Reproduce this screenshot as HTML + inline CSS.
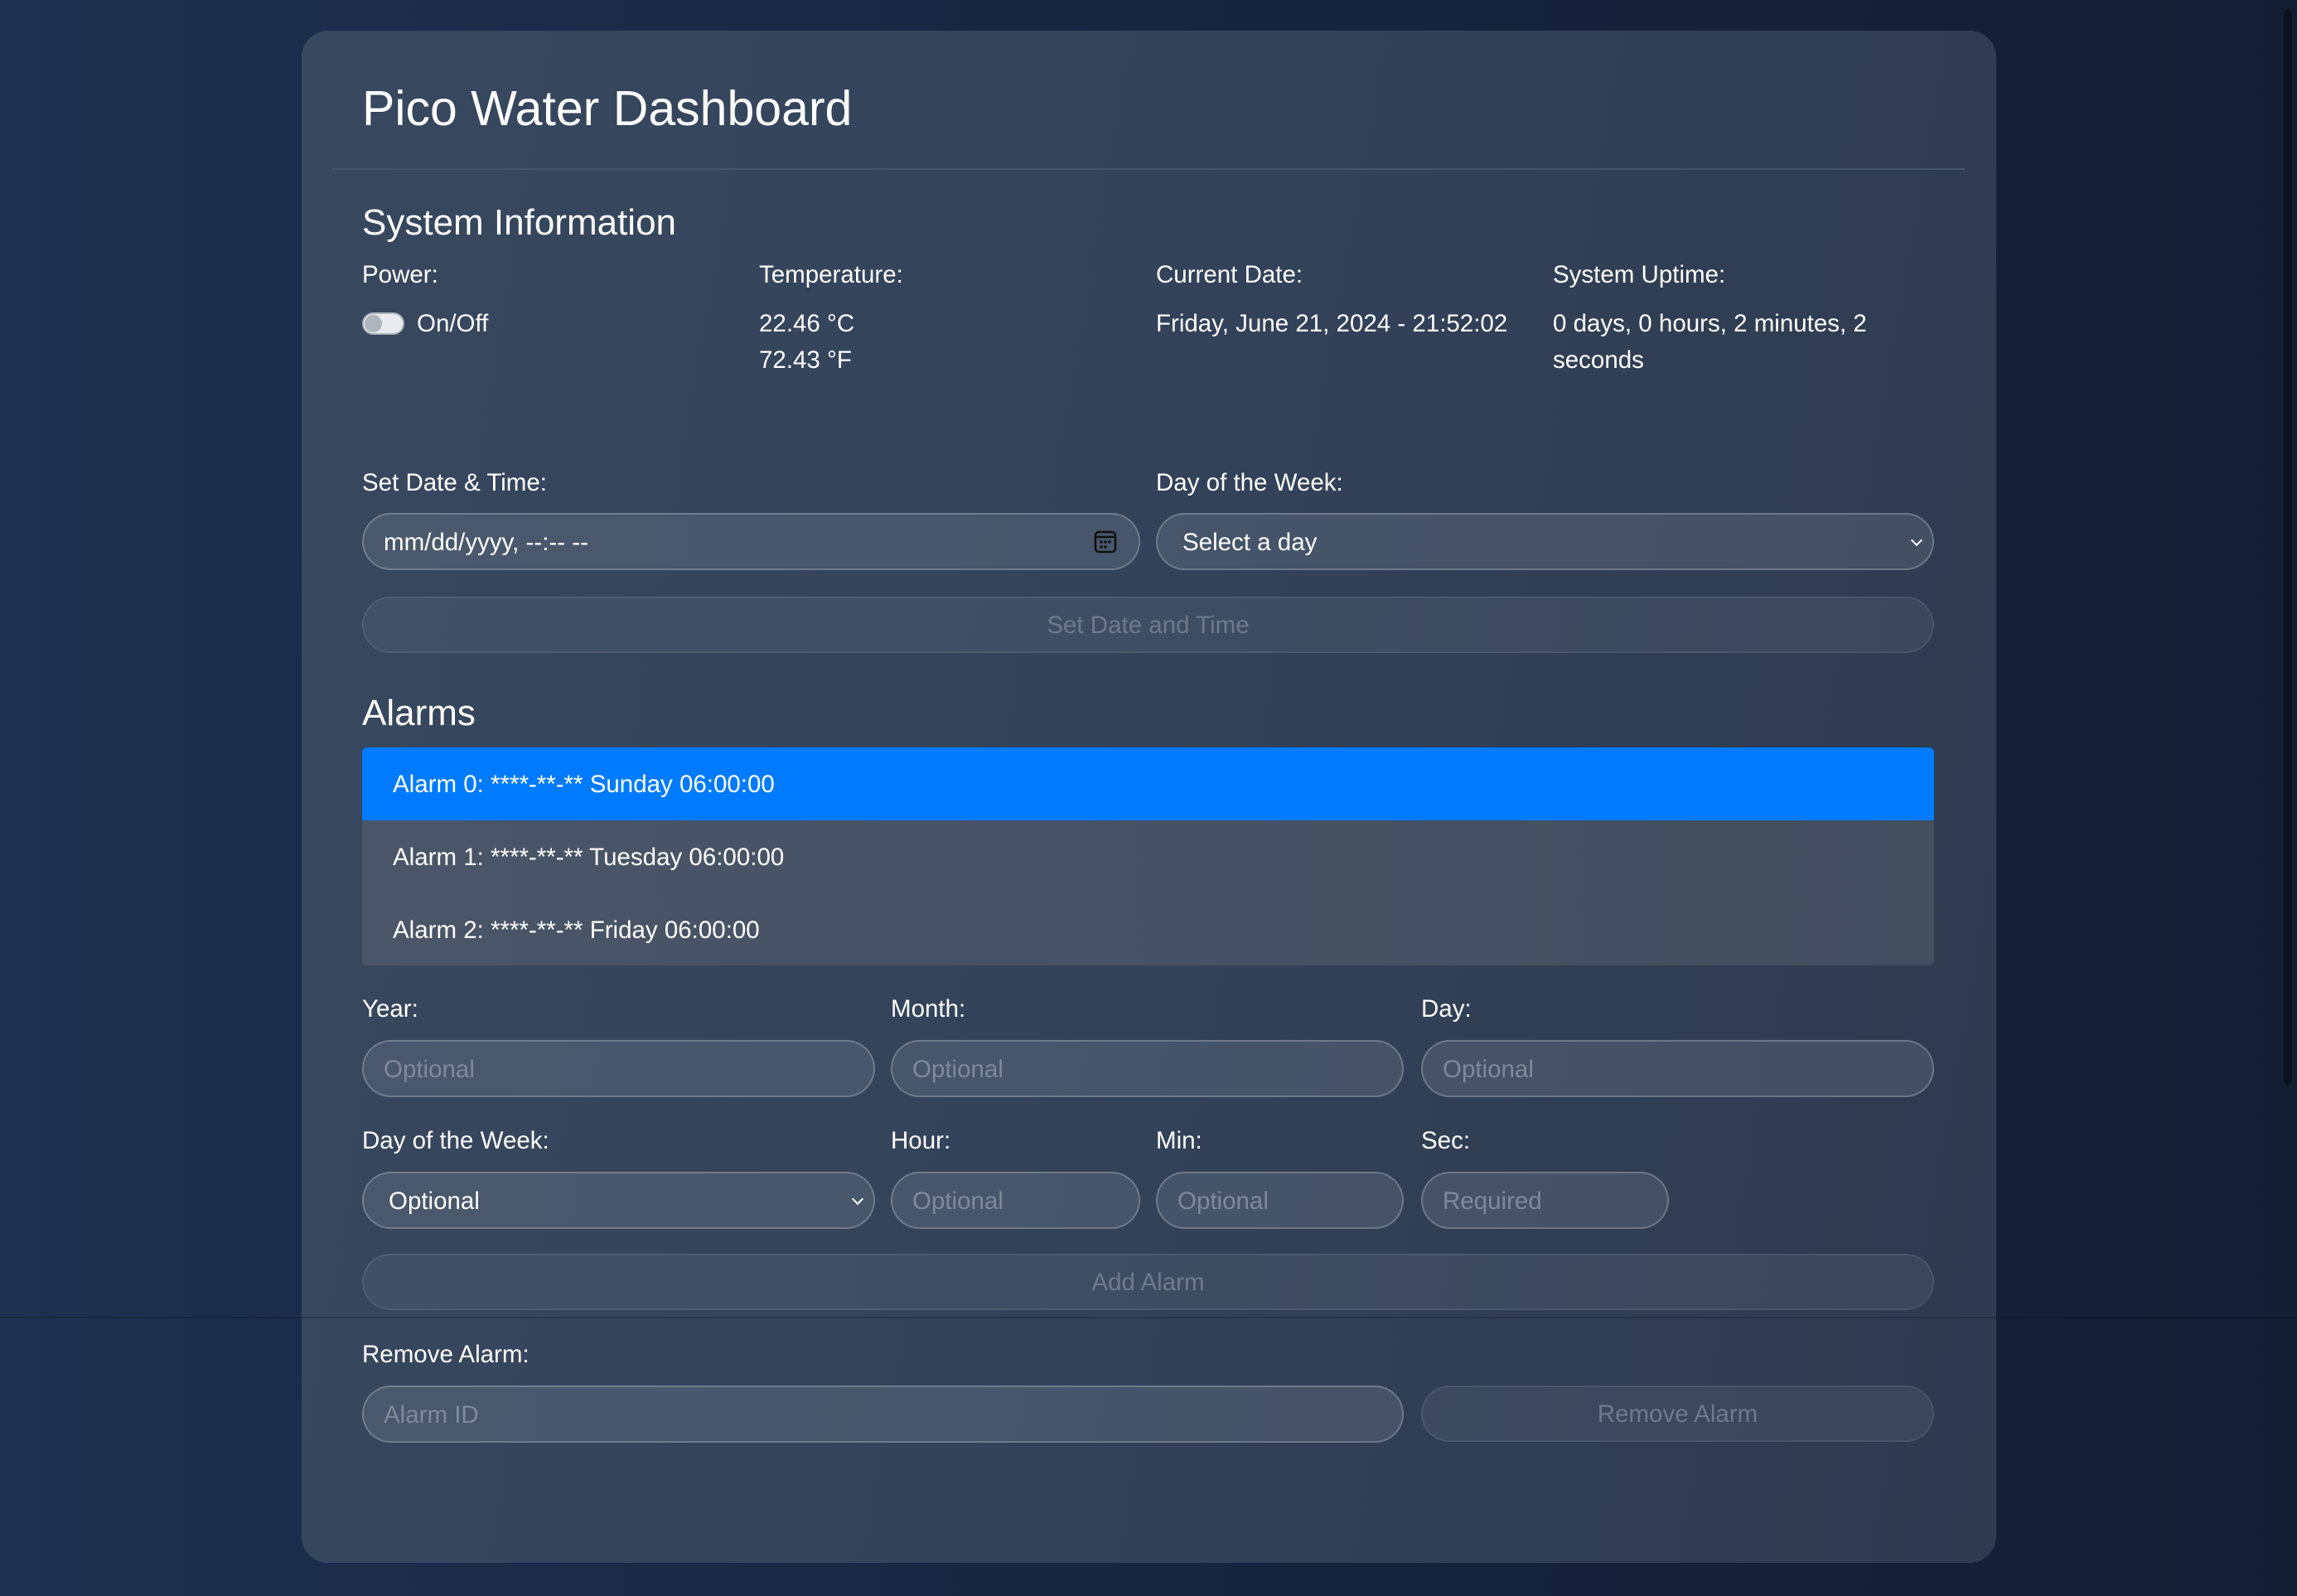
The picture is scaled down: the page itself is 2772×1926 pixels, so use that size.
<!DOCTYPE html>
<html><head><meta charset="utf-8">
<style>
*{box-sizing:border-box;margin:0;padding:0}
html,body{width:2772px;height:1926px;overflow:hidden}
body{background:linear-gradient(90deg,#1f3150 0%,#1c2c4a 15%,#172540 50%,#141e33 100%);font-family:"Liberation Sans",Arial,sans-serif;color:#fff;position:relative}
.card{position:absolute;left:364px;top:37px;width:2045px;height:1849px;border-radius:32px;background:linear-gradient(100deg,#38485e 0%,#33435a 45%,#2e3a4e 100%)}
.a{position:absolute;white-space:nowrap}
.lbl{font-size:29.5px;line-height:32px}
.h1{font-size:59px}
.h2{font-size:44px}
.inp{position:absolute;height:69px;border-radius:35px;background:rgba(255,255,255,0.1);border:2px solid rgba(255,255,255,0.22);font-size:29.5px;line-height:67px;padding-left:24px;color:#7f8998}
.btn{position:absolute;height:68px;border-radius:34px;background:rgba(255,255,255,0.06);border:2px solid rgba(255,255,255,0.08);font-size:29.5px;line-height:66px;text-align:center;color:#6f7a8a}
.sel{color:#fff;padding-left:30px}
.chev{position:absolute;right:14px;top:26px;width:10px;height:10px;border-right:2px solid #fff;border-bottom:2px solid #fff;transform:rotate(45deg)}
.row{position:absolute;left:437px;width:1897px;height:88px;font-size:29.5px;line-height:90px;padding-left:37px}
</style></head><body>
<div class="card"></div>
<div style="position:absolute;right:6px;top:10px;width:10px;height:1300px;border-radius:5px;background:#0c1220"></div>
<div class="a h1" style="left:437px;top:97px">Pico Water Dashboard</div>
<div style="position:absolute;left:401px;top:203px;width:1970px;height:2px;background:#44556b"></div>
<div class="a h2" style="left:437px;top:244px">System Information</div>
<div class="a lbl" style="left:437px;top:316px">Power:</div>
<div class="a lbl" style="left:916px;top:316px">Temperature:</div>
<div class="a lbl" style="left:1395px;top:316px">Current Date:</div>
<div class="a lbl" style="left:1874px;top:316px">System Uptime:</div>
<div style="position:absolute;left:437px;top:377px;width:51px;height:27px;border-radius:14px;background:#e9ecef;border:2px solid #adb5bd"></div>
<div style="position:absolute;left:440px;top:380px;width:21px;height:21px;border-radius:50%;background:#adb5bd"></div>
<div class="a lbl" style="left:503px;top:375px">On/Off</div>
<div class="a lbl" style="left:916px;top:375px">22.46 °C</div>
<div class="a lbl" style="left:916px;top:419px">72.43 °F</div>
<div class="a lbl" style="left:1395px;top:375px">Friday, June 21, 2024 - 21:52:02</div>
<div class="a lbl" style="left:1874px;top:375px">0 days, 0 hours, 2 minutes, 2</div>
<div class="a lbl" style="left:1874px;top:419px">seconds</div>

<div class="a lbl" style="left:437px;top:567px">Set Date &amp; Time:</div>
<div class="a lbl" style="left:1395px;top:567px">Day of the Week:</div>
<div class="inp" style="left:437px;top:619px;width:939px;color:#fff">mm/dd/yyyy, --:-- --
<svg style="position:absolute;right:26px;top:19px" width="28" height="28" viewBox="0 0 28 28"><rect x="2" y="2" width="24" height="24" rx="4" fill="none" stroke="#111" stroke-width="2.5"/><line x1="2" y1="8" x2="26" y2="8" stroke="#111" stroke-width="2.5"/><circle cx="9" cy="14" r="1.8" fill="#111"/><circle cx="14" cy="14" r="1.8" fill="#111"/><circle cx="19" cy="14" r="1.8" fill="#111"/><circle cx="9" cy="20" r="1.8" fill="#111"/><circle cx="14" cy="20" r="1.8" fill="#111"/></svg></div>
<div class="inp sel" style="left:1395px;top:619px;width:939px">Select a day<div class="chev"></div></div>
<div class="btn" style="left:437px;top:720px;width:1897px">Set Date and Time</div>

<div class="a h2" style="left:437px;top:836px">Alarms</div>
<div style="position:absolute;left:437px;top:902px;width:1897px;height:263px;border-radius:6px;background:linear-gradient(90deg,#4a5668,#434e5f)"></div>
<div class="row" style="top:902px;background:#007bff;border-radius:6px 6px 0 0">Alarm 0: ****-**-** Sunday 06:00:00</div>
<div class="row" style="top:990px">Alarm 1: ****-**-** Tuesday 06:00:00</div>
<div class="row" style="top:1078px">Alarm 2: ****-**-** Friday 06:00:00</div>

<div class="a lbl" style="left:437px;top:1202px">Year:</div>
<div class="a lbl" style="left:1075px;top:1202px">Month:</div>
<div class="a lbl" style="left:1715px;top:1202px">Day:</div>
<div class="inp" style="left:437px;top:1255px;width:619px">Optional</div>
<div class="inp" style="left:1075px;top:1255px;width:619px">Optional</div>
<div class="inp" style="left:1715px;top:1255px;width:619px">Optional</div>

<div class="a lbl" style="left:437px;top:1361px">Day of the Week:</div>
<div class="a lbl" style="left:1075px;top:1361px">Hour:</div>
<div class="a lbl" style="left:1395px;top:1361px">Min:</div>
<div class="a lbl" style="left:1715px;top:1361px">Sec:</div>
<div class="inp sel" style="left:437px;top:1414px;width:619px">Optional<div class="chev"></div></div>
<div class="inp" style="left:1075px;top:1414px;width:301px">Optional</div>
<div class="inp" style="left:1395px;top:1414px;width:299px">Optional</div>
<div class="inp" style="left:1715px;top:1414px;width:299px">Required</div>
<div class="btn" style="left:437px;top:1513px;width:1897px">Add Alarm</div>
<div style="position:absolute;left:0;top:1589px;width:2772px;height:2px;background:rgba(0,0,0,0.18)"></div>

<div class="a lbl" style="left:437px;top:1619px">Remove Alarm:</div>
<div class="inp" style="left:437px;top:1672px;width:1257px">Alarm ID</div>
<div class="btn" style="left:1715px;top:1672px;width:619px">Remove Alarm</div>
</body></html>
